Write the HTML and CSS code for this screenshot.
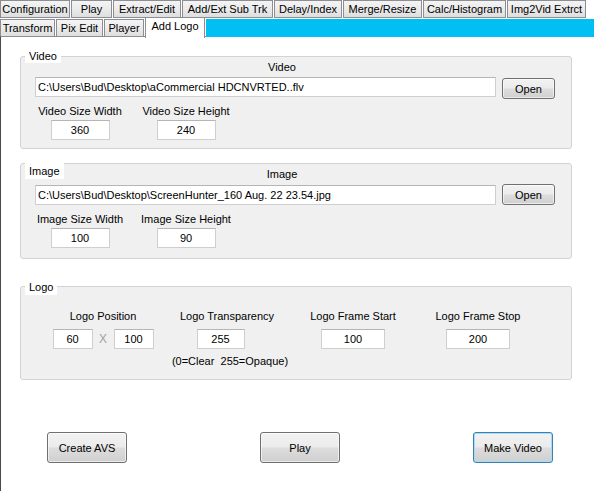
FILE: index.html
```html
<!DOCTYPE html>
<html>
<head>
<meta charset="utf-8">
<link rel="stylesheet" href="styles.css">
</head>
<body>
<div class="tabstrip">
  <div class="tabrow row1">
    <div class="tab w-config">Configuration</div>
    <div class="tab w-play">Play</div>
    <div class="tab w-extract">Extract/Edit</div>
    <div class="tab w-sub">Add/Ext Sub Trk</div>
    <div class="tab w-delay">Delay/Index</div>
    <div class="tab w-merge">Merge/Resize</div>
    <div class="tab w-calc">Calc/Histogram</div>
    <div class="tab w-img2vid">Img2Vid Extrct</div>
  </div>
  <div class="tabrow row2">
    <div class="tab w-transform">Transform</div>
    <div class="tab w-pix">Pix Edit</div>
    <div class="tab w-player">Player</div>
    <div class="tab tab-selected">Add Logo</div>
    <div class="tab-fill"></div>
  </div>
</div>
<div class="panel">
  <section class="group group-video">
    <div class="group-title">Video</div>
    <div class="caption">Video</div>
    <div class="file-row">
      <div class="textbox path">C:\Users\Bud\Desktop\aCommercial HDCNVRTED..flv</div>
      <button class="btn open">Open</button>
    </div>
    <div class="size-row">
      <div class="field"><div class="label">Video Size Width</div><div class="textbox num">360</div></div>
      <div class="field"><div class="label">Video Size Height</div><div class="textbox num">240</div></div>
    </div>
  </section>

  <section class="group group-image">
    <div class="group-title">Image</div>
    <div class="caption">Image</div>
    <div class="file-row">
      <div class="textbox path">C:\Users\Bud\Desktop\ScreenHunter_160 Aug. 22 23.54.jpg</div>
      <button class="btn open open-up">Open</button>
    </div>
    <div class="size-row">
      <div class="field"><div class="label">Image Size Width</div><div class="textbox num">100</div></div>
      <div class="field"><div class="label">Image Size Height</div><div class="textbox num">90</div></div>
    </div>
  </section>

  <section class="group group-logo">
    <div class="group-title">Logo</div>
    <div class="logo-row">
      <div class="lfield col-pos">
        <div class="label">Logo Position</div>
        <div class="pos-inputs">
          <div class="textbox num pos">60</div>
          <span class="times">X</span>
          <div class="textbox num pos">100</div>
        </div>
      </div>
      <div class="lfield col-trans">
        <div class="label">Logo Transparency</div>
        <div class="textbox num trans">255</div>
        <div class="note">(0=Clear&nbsp; 255=Opaque)</div>
      </div>
      <div class="lfield col-start">
        <div class="label">Logo Frame Start</div>
        <div class="textbox num frame">100</div>
      </div>
      <div class="lfield col-stop">
        <div class="label">Logo Frame Stop</div>
        <div class="textbox num frame">200</div>
      </div>
    </div>
  </section>

  <div class="actions">
    <button class="btn action">Create AVS</button>
    <button class="btn action">Play</button>
    <button class="btn action default">Make Video</button>
  </div>
</div>
</body>
</html>
```
FILE: styles.css
```css
html, body {
  margin: 0;
  padding: 0;
  background: #ffffff;
}
body {
  font-family: "Liberation Sans", Arial, sans-serif;
  font-size: 11px;
  color: #000;
  width: 594px;
  height: 491px;
  overflow: hidden;
}

/* ---------- tab strip ---------- */
.tabrow {
  display: flex;
  gap: 1px;
}
.row1 {
  height: 18px;
  margin-bottom: 1px;
}
.row2 {
  height: 17px;
}
.tab {
  box-sizing: border-box;
  height: 100%;
  border: 1px solid #8c8e94;
  background: linear-gradient(#f4f4f4, #ebebeb 50%, #dedede);
  text-align: center;
  line-height: 16px;
  white-space: nowrap;
  flex: none;
}
.row2 .tab {
  border-bottom: none;
}
.w-config { width: 70px; }
.w-play { width: 41px; }
.w-extract { width: 68px; }
.w-sub { width: 91px; }
.w-delay { width: 68px; }
.w-merge { width: 79px; }
.w-calc { width: 83px; }
.w-img2vid { width: 79px; }
.w-transform { width: 55px; }
.w-pix { width: 47px; }
.w-player { width: 40px; }
.row2 .tab-selected {
  width: 60px;
  height: 21px;
  margin-top: -2px;
  background: #ffffff;
  position: relative;
  z-index: 1;
  line-height: 17px;
}
.tab-fill {
  flex: 1;
  height: 18px;
  background: #00bff2;
}

/* ---------- panel ---------- */
.panel {
  box-sizing: border-box;
  height: 455px;
  border-top: 1px solid #8c8e94;
  border-left: 1px solid #4a4a4a;
  padding-top: 19px;
  background: #ffffff;
}

.group {
  position: relative;
  box-sizing: border-box;
  margin-left: 19px;
  width: 552px;
  border: 1px solid #d3d3d3;
  border-radius: 3px;
  background: #f0f0f0;
  padding: 4px 0 8px 14px;
}
.group-title {
  position: absolute;
  left: 4px;
  top: -7px;
  background: #ffffff;
  padding: 0 4px;
  line-height: 13px;
}
.group-image {
  margin-top: 14px;
  padding-bottom: 10px;
}
.group-image .group-title {
  top: -1px;
  padding: 2px 4px 1px;
}
.group-logo {
  margin-top: 27px;
  padding-top: 23px;
  padding-bottom: 11px;
}
.group-logo .group-title {
  padding: 1px 4px 1px;
}

.caption {
  width: 494px;
  text-align: center;
  line-height: 13px;
}
.group-image .caption + .file-row {
  margin-top: 4px;
}

.file-row {
  display: flex;
  align-items: flex-start;
  margin-top: 3px;
}
.textbox {
  box-sizing: border-box;
  height: 20px;
  background: #ffffff;
  border: 1px solid #cfcfcf;
  border-top-color: #b5b5b5;
  line-height: 18px;
  white-space: nowrap;
  overflow: hidden;
}
.path {
  width: 461px;
  padding-left: 2px;
}

.btn {
  box-sizing: border-box;
  font: inherit;
  color: #000;
  padding: 0;
  border: 1px solid #707070;
  border-radius: 3px;
  background: linear-gradient(#f2f2f2, #ebebeb 48%, #dddddd 52%, #cfcfcf);
  box-shadow: inset 0 0 0 1px rgba(255, 255, 255, 0.6);
}
.open {
  width: 53px;
  height: 21px;
  margin-left: 6px;
  margin-top: 1px;
}
.open-up {
  margin-top: -1px;
}

.size-row {
  display: flex;
  gap: 16px;
  margin-top: 6px;
}
.group-image .size-row {
  margin-top: 8px;
}
.field {
  display: flex;
  flex-direction: column;
  align-items: center;
  width: 90px;
}
.label {
  line-height: 13px;
  white-space: nowrap;
}
.num {
  text-align: center;
}
.field .num {
  width: 59px;
  margin-top: 2px;
}

/* ---------- logo row ---------- */
.logo-row {
  display: flex;
  padding-left: 18px;
}
.lfield {
  display: flex;
  flex-direction: column;
  align-items: center;
}
.lfield > .textbox,
.pos-inputs {
  margin-top: 6px;
}
.col-pos { width: 100px; }
.col-trans { width: 120px; margin-left: 14px; }
.col-start { width: 100px; margin-left: 16px; }
.col-stop { width: 100px; margin-left: 25px; }

.pos-inputs {
  display: flex;
  align-items: center;
}
.pos {
  width: 40px;
}
.times {
  width: 21px;
  text-align: center;
  color: #a3a3a3;
  font-size: 12px;
}
.trans {
  width: 48px;
  margin-right: 13px;
}
.note {
  margin-top: 6px;
  margin-left: 6px;
  line-height: 13px;
  white-space: nowrap;
}
.frame {
  width: 64px;
}

/* ---------- bottom buttons ---------- */
.actions {
  display: flex;
  gap: 133px;
  padding-left: 46px;
  margin-top: 52px;
}
.action {
  width: 80px;
  height: 31px;
}
.default {
  border-color: #3c7fb1;
  box-shadow: inset 0 0 0 1px #a8dcf4;
}
```
